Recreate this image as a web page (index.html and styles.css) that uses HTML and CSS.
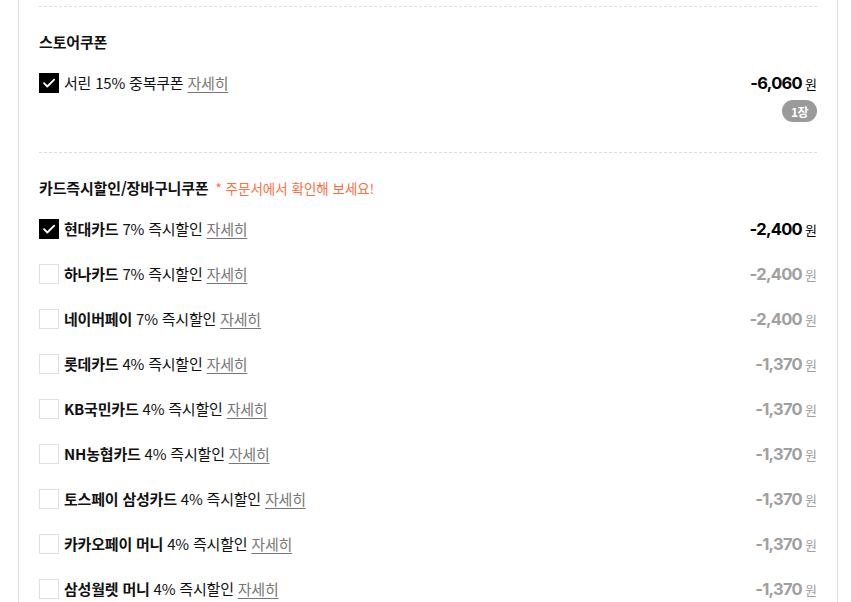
FILE: index.html
```html
<!DOCTYPE html>
<html lang="ko">
<head>
<meta charset="utf-8">
<link rel="stylesheet" href="styles.css">
</head>
<body>
<div class="panel">
  <section class="sec">
    <h3 class="sec-title">스토어쿠폰</h3>
    <ul class="list">
      <li class="row">
        <span class="chk on"><svg viewBox="0 0 20 20" width="20" height="20"><path d="M5 10.2l3.3 3.3L15.2 6.6" fill="none" stroke="#fff" stroke-width="1.8" stroke-linecap="round" stroke-linejoin="round"/></svg></span>
        <span class="label">서린 15% 중복쿠폰 <a class="more">자세히</a></span>
        <span class="price on">-6,060<span class="won">원</span></span>
      </li>
    </ul>
    <div class="badge-wrap"><span class="badge">1장</span></div>
  </section>
  <section class="sec">
    <h3 class="sec-title">카드즉시할인/장바구니쿠폰 <span class="note">* 주문서에서 확인해 보세요!</span></h3>
    <ul class="list">
      <li class="row">
        <span class="chk on"><svg viewBox="0 0 20 20" width="20" height="20"><path d="M5 10.2l3.3 3.3L15.2 6.6" fill="none" stroke="#fff" stroke-width="1.8" stroke-linecap="round" stroke-linejoin="round"/></svg></span>
        <span class="label"><b>현대카드</b> 7% 즉시할인 <a class="more">자세히</a></span>
        <span class="price on">-2,400<span class="won">원</span></span>
      </li>
      <li class="row">
        <span class="chk"></span>
        <span class="label"><b>하나카드</b> 7% 즉시할인 <a class="more">자세히</a></span>
        <span class="price">-2,400<span class="won">원</span></span>
      </li>
      <li class="row">
        <span class="chk"></span>
        <span class="label"><b>네이버페이</b> 7% 즉시할인 <a class="more">자세히</a></span>
        <span class="price">-2,400<span class="won">원</span></span>
      </li>
      <li class="row">
        <span class="chk"></span>
        <span class="label"><b>롯데카드</b> 4% 즉시할인 <a class="more">자세히</a></span>
        <span class="price">-1,370<span class="won">원</span></span>
      </li>
      <li class="row">
        <span class="chk"></span>
        <span class="label"><b>KB국민카드</b> 4% 즉시할인 <a class="more">자세히</a></span>
        <span class="price">-1,370<span class="won">원</span></span>
      </li>
      <li class="row">
        <span class="chk"></span>
        <span class="label"><b>NH농협카드</b> 4% 즉시할인 <a class="more">자세히</a></span>
        <span class="price">-1,370<span class="won">원</span></span>
      </li>
      <li class="row">
        <span class="chk"></span>
        <span class="label"><b>토스페이 삼성카드</b> 4% 즉시할인 <a class="more">자세히</a></span>
        <span class="price">-1,370<span class="won">원</span></span>
      </li>
      <li class="row">
        <span class="chk"></span>
        <span class="label"><b>카카오페이 머니</b> 4% 즉시할인 <a class="more">자세히</a></span>
        <span class="price">-1,370<span class="won">원</span></span>
      </li>
      <li class="row">
        <span class="chk"></span>
        <span class="label"><b>삼성월렛 머니</b> 4% 즉시할인 <a class="more">자세히</a></span>
        <span class="price">-1,370<span class="won">원</span></span>
      </li>
    </ul>
  </section>
</div>
</body>
</html>
```
FILE: styles.css
```css
* { box-sizing: border-box; }
html, body { margin: 0; padding: 0; background: #fff; }
body {
  font-family: "Noto Sans CJK KR", "Noto Sans", sans-serif;
  color: #111;
  height: 602px;
  overflow: hidden;
}
.panel {
  margin-left: 18px;
  width: 820px;
  min-height: 640px;
  border-left: 1px solid #e2e2e2;
  border-right: 1px solid #e2e2e2;
  padding: 6px 20px 0;
}
.sec {
  border-top: 1px dashed #dcdcdc;
  padding: 24px 0 30px;
}
.sec-title {
  margin: 0;
  font-size: 15px;
  line-height: 22px;
  font-weight: 700;
  letter-spacing: -0.15px;
  display: flex;
  align-items: baseline;
  gap: 7px;
}
.note {
  font-size: 13.5px;
  font-weight: 400;
  color: #ff6f3f;
  letter-spacing: 0;
}
.list {
  list-style: none;
  margin: 19px 0 0;
  padding: 0;
  display: flex;
  flex-direction: column;
  gap: 23px;
}
.row {
  display: flex;
  align-items: center;
  height: 22px;
}
.chk {
  width: 20px;
  height: 20px;
  border: 1px solid #e0e0e0;
  background: #fff;
  flex: none;
  display: flex;
  align-items: center;
  justify-content: center;
}
.chk.on { background: #000; border-color: #000; }
.chk svg { display: block; flex: none; }
.label {
  margin-left: 5px;
  font-size: 15px;
  line-height: 22px;
  letter-spacing: -0.2px;
  flex: 1;
  color: #111;
}
.label b { font-weight: 700; }
.more {
  color: #777;
  text-decoration: underline;
  text-underline-offset: 3px;
}
.price {
  font-family: Inter, "Noto Sans CJK KR", sans-serif;
  font-weight: 700;
  font-size: 16.5px;
  letter-spacing: -0.7px;
  color: #a0a0a0;
  display: flex;
  align-items: baseline;
}
.price.on { color: #000; }
.won {
  font-family: "Noto Sans CJK KR", sans-serif;
  font-weight: 400;
  font-size: 13px;
  margin-left: 3px;
  letter-spacing: 0;
}
.badge-wrap {
  display: flex;
  justify-content: flex-end;
  margin-top: 6px;
}
.badge {
  height: 22px;
  width: 35px;
  border-radius: 11px;
  background: #9a9a9a;
  color: #fff;
  font-size: 12px;
  font-weight: 700;
  letter-spacing: -0.5px;
  display: flex;
  align-items: center;
  justify-content: center;
}
```
